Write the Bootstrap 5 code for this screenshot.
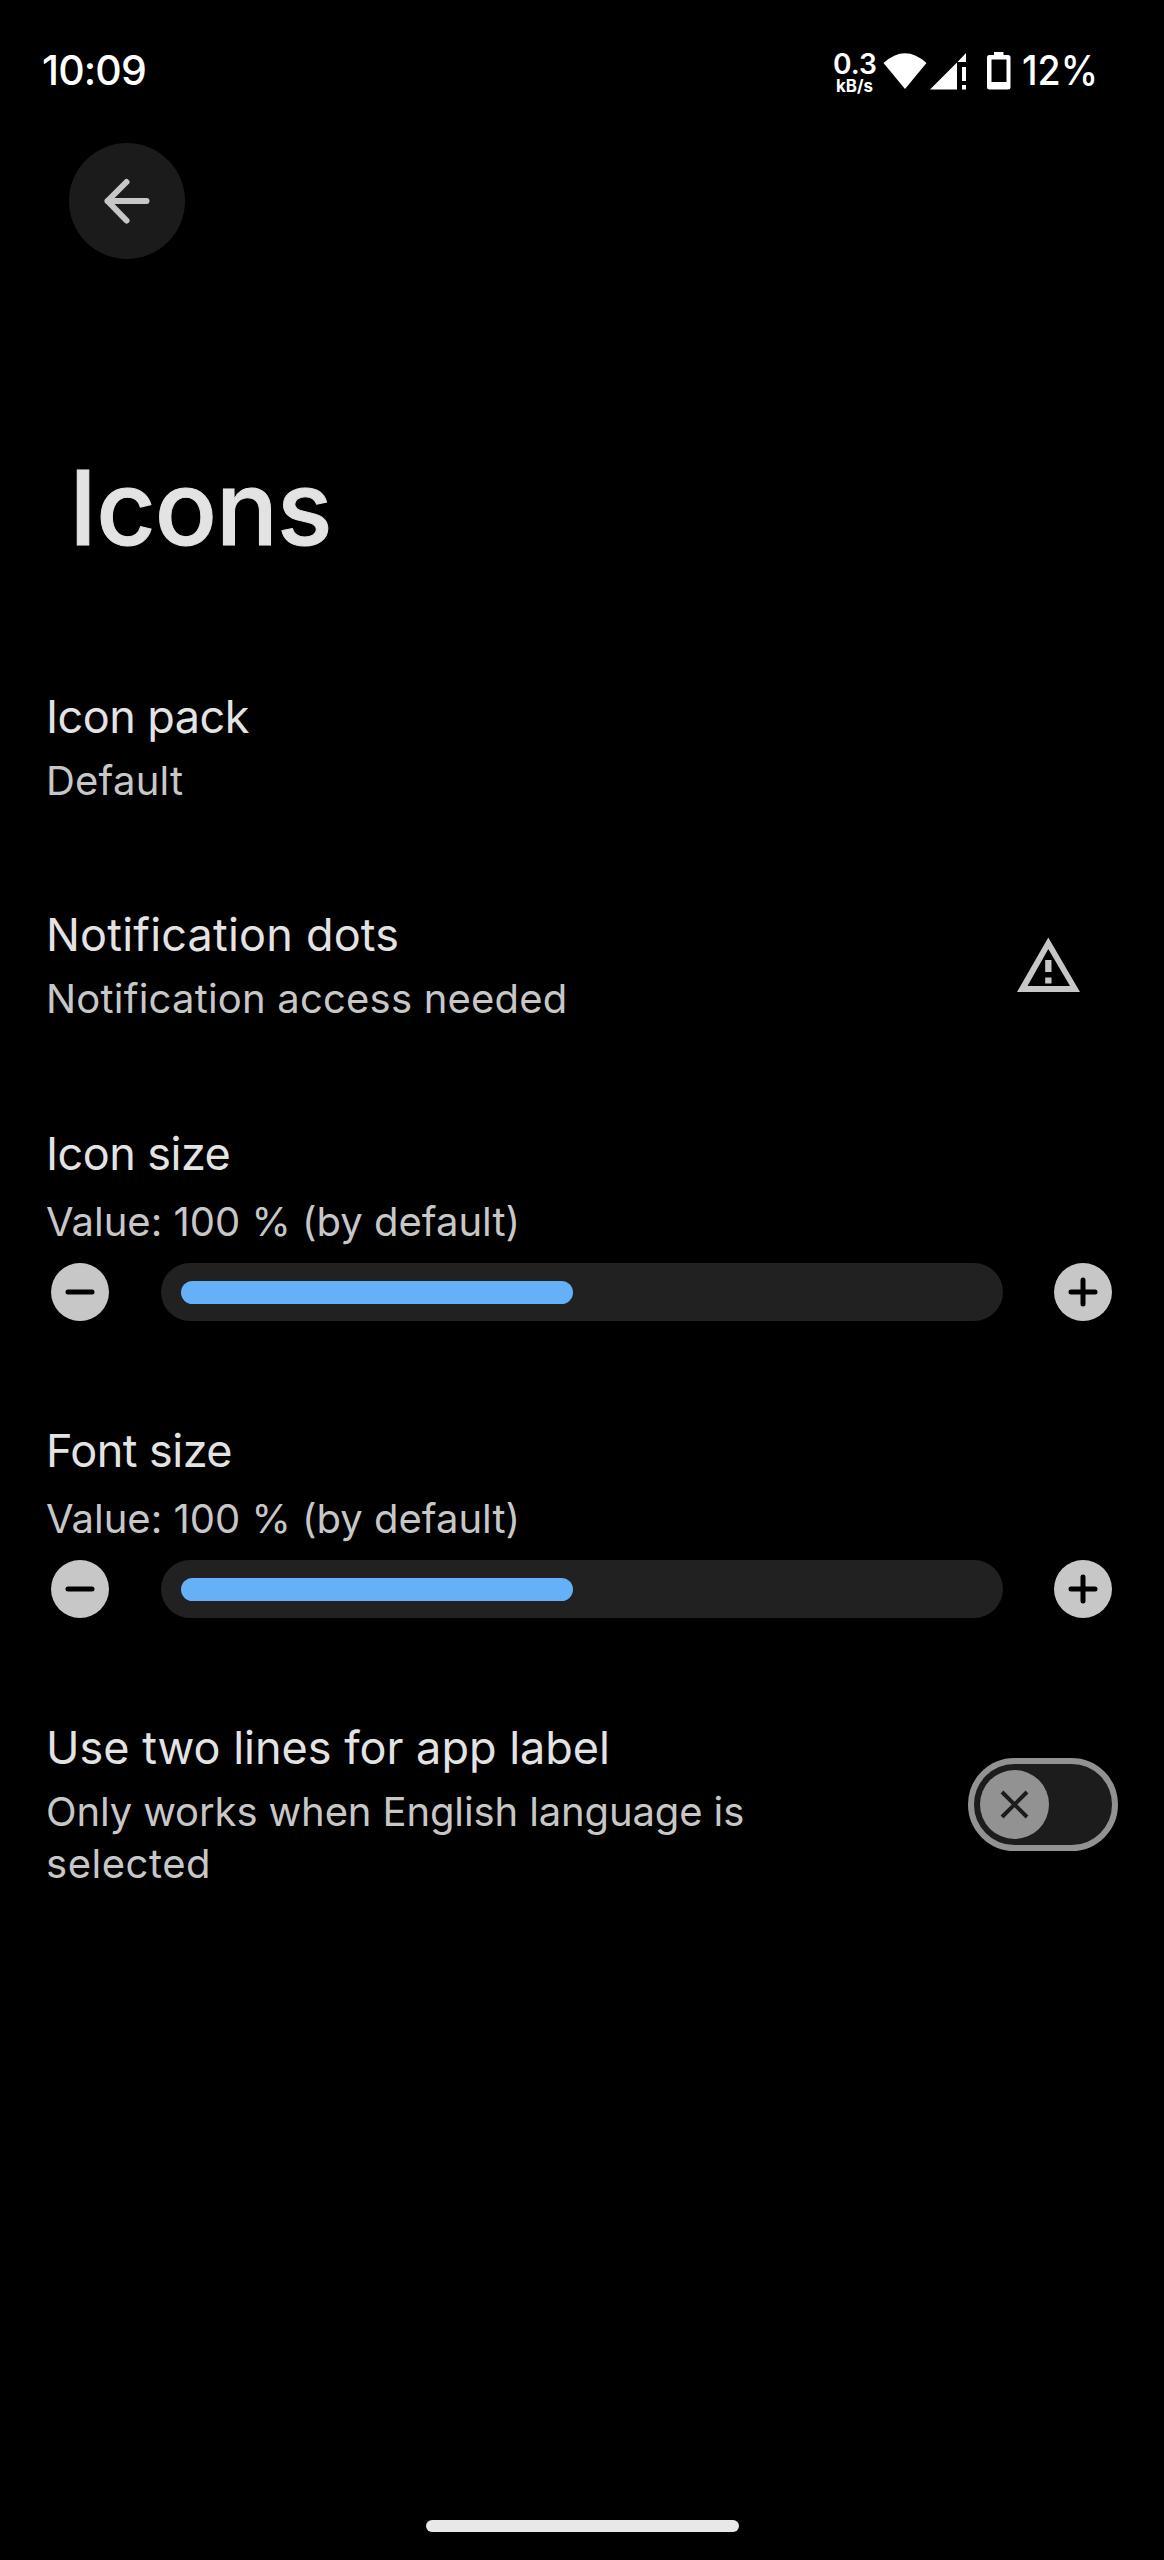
<!DOCTYPE html>
<html lang="en">
<head>
<meta charset="utf-8">
<meta name="viewport" content="width=device-width, initial-scale=1">
<title>Icons</title>
<link href="https://cdn.jsdelivr.net/npm/bootstrap@5.3.0/dist/css/bootstrap.min.css" rel="stylesheet">
<style>
body{background:#000;color:#e3e3e3;font-family:Inter,"Open Sans",sans-serif;height:2560px;overflow:hidden}
svg{display:block;flex:none}
.status-bar{height:143px;padding:40px 0 0 42px;color:#fff}
.clock{font-size:41px;line-height:60px;font-weight:500;letter-spacing:-.85px}
.status-icons{width:336px;height:60px}
.back-btn{width:116px;height:116px;margin-left:69px;background:#1b1b1b;color:#c7c7c7;border:0}
.page-title{font-size:103px;line-height:124px;font-weight:500;margin:187px 0 0 69px;height:240.5px;letter-spacing:-.92px;-webkit-text-stroke:1px currentColor}
.pref-title{font-size:45px;line-height:60px;white-space:nowrap}
.pref-sub{font-size:40px;line-height:52px;color:#c7c7c7;margin-top:8px;white-space:nowrap}
.pref{padding-left:46px}
.pref-plain{height:218.5px}
.pref-slider{height:297px}
.pref-slider .pref-sub{margin-top:12px}
.ls-snug{letter-spacing:-.53px}
.ls-tight{letter-spacing:-.12px}
.ls-open{letter-spacing:.2px}
.ls-wide{letter-spacing:.53px}
.slider-row{margin:15.5px 0 0 5px;height:58px}
.round-btn{width:58px;height:58px;background:#c7c7c7;border:0;color:#000}
.slider-track{width:842px;height:58px;margin:0 51px 0 52px;padding-left:20px;background:#212121;border-radius:29px}
.slider-track .progress-bar{height:23px;border-radius:12px;background:#65b0f6}
.toggle{width:150px;height:93px;border:6px solid #929292;border-radius:47px;background:#1c1c1c;padding-left:6px;margin:40px 46px 0 0}
.thumb{width:69px;height:69px;background:#929292}
.home-bar{width:313px;height:12px;background:#e8e8e8;margin-left:426px;margin-bottom:28px}
</style>
<script src="https://cdn.jsdelivr.net/npm/bootstrap@5.3.0/dist/js/bootstrap.bundle.min.js"></script>
</head>
<body class="d-flex flex-column">
<header class="status-bar d-flex justify-content-between align-items-start">
  <div class="clock">10:09</div>
  <svg class="status-icons" viewBox="828 40 336 60" fill="#fff">
    <text x="833" y="74" font-size="28" font-weight="600" textLength="44" lengthAdjust="spacingAndGlyphs">0.3</text>
    <text x="836" y="91.500" font-size="17" font-weight="700" textLength="37" lengthAdjust="spacingAndGlyphs">kB/s</text>
    <path d="M883.5 63Q905 43.500 926.500 63L905 89Z"/>
    <path d="M930 89.500L957 62.500V89.500ZM957.500 62L966 53V62ZM962 67H966V81H962ZM962 85H966V89.500H962Z"/>
    <path fill-rule="evenodd" d="M994 52H1003.500V55H1008Q1010.500 55 1010.500 57.500V87Q1010.500 89.500 1008 89.500H989.500Q987 89.500 987 87V57.500Q987 55 989.500 55H994ZM991.500 59.500V82H1006.500V59.500Z"/>
    <text x="1022" y="85" font-size="41" font-weight="500" textLength="76" lengthAdjust="spacingAndGlyphs">12%</text>
  </svg>
</header>

<button class="back-btn rounded-circle d-flex align-items-center justify-content-center p-0 flex-shrink-0" aria-label="Back">
  <svg width="116" height="116" viewBox="0 0 116 116" fill="none" stroke="currentColor" stroke-width="6" stroke-linecap="round" stroke-linejoin="round"><path d="M57.500 39L38.500 58L57.500 77.500M38.500 58H77.500"/></svg>
</button>
<h1 class="page-title mb-0 flex-shrink-0">Icons</h1>

<main class="flex-grow-1">
  <section class="pref pref-plain">
    <div class="pref-title ls-snug">Icon pack</div>
    <div class="pref-sub ls-open">Default</div>
  </section>
  <section class="pref pref-plain d-flex justify-content-between">
    <div>
      <div class="pref-title ls-open">Notification dots</div>
      <div class="pref-sub ls-open">Notification access needed</div>
    </div>
    <svg width="164" height="100" viewBox="1000 904.500 164 100" fill="#c7c7c7"><path fill-rule="evenodd" d="M1048.300 937L1080 991.500H1017ZM1048.300 948.500L1027.500 985.500H1070Z"/><path d="M1045.200 959.500H1051.500V971.500H1045.200ZM1045.200 977H1051.500V983H1045.200Z"/></svg>
  </section>
  <section class="pref pref-slider">
    <div class="pref-title ls-snug">Icon size</div>
    <div class="pref-sub">Value: 100 % (by default)</div>
    <div class="slider-row d-flex align-items-center">
      <button class="round-btn rounded-circle p-0" aria-label="Decrease"><svg width="58" height="58" stroke="#000" stroke-width="5" stroke-linecap="round"><path d="M17 29H41"/></svg></button>
      <div class="slider-track d-flex align-items-center"><div class="progress-bar" style="width:392px"></div></div>
      <button class="round-btn rounded-circle p-0" aria-label="Increase"><svg width="58" height="58" stroke="#000" stroke-width="5" stroke-linecap="round"><path d="M17 29H41M29 17V41"/></svg></button>
    </div>
  </section>
  <section class="pref pref-slider">
    <div class="pref-title ls-snug">Font size</div>
    <div class="pref-sub">Value: 100 % (by default)</div>
    <div class="slider-row d-flex align-items-center">
      <button class="round-btn rounded-circle p-0" aria-label="Decrease"><svg width="58" height="58" stroke="#000" stroke-width="5" stroke-linecap="round"><path d="M17 29H41"/></svg></button>
      <div class="slider-track d-flex align-items-center"><div class="progress-bar" style="width:392px"></div></div>
      <button class="round-btn rounded-circle p-0" aria-label="Increase"><svg width="58" height="58" stroke="#000" stroke-width="5" stroke-linecap="round"><path d="M17 29H41M29 17V41"/></svg></button>
    </div>
  </section>
  <section class="pref d-flex justify-content-between align-items-start">
    <div>
      <div class="pref-title">Use two lines for app label</div>
      <div class="pref-sub"><span class="ls-tight">Only works when English language is</span><br><span class="ls-wide">selected</span></div>
    </div>
    <div class="toggle d-flex align-items-center" role="switch" aria-checked="false">
      <div class="thumb rounded-circle"><svg width="69" height="69" stroke="#1c1c1c" stroke-width="4"><path d="M22 22L47 47M47 22L22 47"/></svg></div>
    </div>
  </section>
</main>
<div class="home-bar rounded-pill flex-shrink-0"></div>
</body>
</html>
